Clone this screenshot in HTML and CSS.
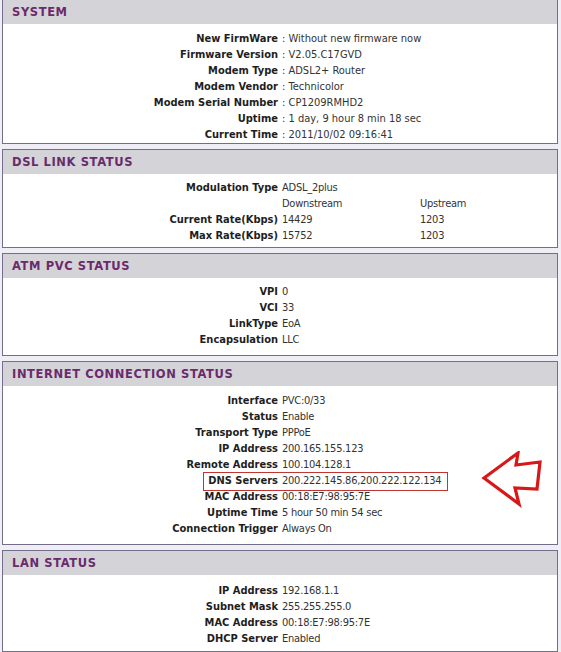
FILE: index.html
```html
<!DOCTYPE html>
<html>
<head>
<meta charset="utf-8">
<link rel="stylesheet" href="styles.css">
</head>
<body>
<div class="page">
  <section class="panel p-sys">
    <div class="panel-head">SYSTEM</div>
    <div class="panel-body kv sys">
      <span class="k">New FirmWare</span><span class="v">: Without new firmware now</span>
      <span class="k">Firmware Version</span><span class="v">: V2.05.C17GVD</span>
      <span class="k">Modem Type</span><span class="v">: ADSL2+ Router</span>
      <span class="k">Modem Vendor</span><span class="v">: Technicolor</span>
      <span class="k">Modem Serial Number</span><span class="v">: CP1209RMHD2</span>
      <span class="k">Uptime</span><span class="v">: 1 day, 9 hour 8 min 18 sec</span>
      <span class="k">Current Time</span><span class="v">: 2011/10/02 09:16:41</span>
    </div>
  </section>

  <section class="panel p-dsl">
    <div class="panel-head">DSL LINK STATUS</div>
    <div class="panel-body kv dsl">
      <span class="k">Modulation Type</span><span class="v">ADSL_2plus</span><span class="v"></span>
      <span class="k"></span><span class="v">Downstream</span><span class="v">Upstream</span>
      <span class="k">Current Rate(Kbps)</span><span class="v">14429</span><span class="v">1203</span>
      <span class="k">Max Rate(Kbps)</span><span class="v">15752</span><span class="v">1203</span>
    </div>
  </section>

  <section class="panel p-atm">
    <div class="panel-head">ATM PVC STATUS</div>
    <div class="panel-body kv std">
      <span class="k">VPI</span><span class="v">0</span>
      <span class="k">VCI</span><span class="v">33</span>
      <span class="k">LinkType</span><span class="v">EoA</span>
      <span class="k">Encapsulation</span><span class="v">LLC</span>
    </div>
  </section>

  <section class="panel p-inet">
    <div class="panel-head">INTERNET CONNECTION STATUS</div>
    <div class="panel-body kv std">
      <span class="k">Interface</span><span class="v">PVC:0/33</span>
      <span class="k">Status</span><span class="v">Enable</span>
      <span class="k">Transport Type</span><span class="v">PPPoE</span>
      <span class="k">IP Address</span><span class="v">200.165.155.123</span>
      <span class="k">Remote Address</span><span class="v">100.104.128.1</span>
      <span class="k"><span class="mark-k">DNS Servers</span></span><span class="v"><span class="mark-v">200.222.145.86,200.222.122.134</span></span>
      <span class="k">MAC Address</span><span class="v">00:18:E7:98:95:7E</span>
      <span class="k">Uptime Time</span><span class="v">5 hour 50 min 54 sec</span>
      <span class="k">Connection Trigger</span><span class="v">Always On</span>
    </div>
    <svg class="arrow" width="64" height="58" viewBox="0 0 64 58">
      <polygon points="3,27 37,2 35,14 59,11 56,38 34,37 38,53" fill="none" stroke="#d81818" stroke-width="3.2" stroke-linejoin="miter"/>
    </svg>
  </section>

  <section class="panel p-lan">
    <div class="panel-head">LAN STATUS</div>
    <div class="panel-body kv std">
      <span class="k">IP Address</span><span class="v">192.168.1.1</span>
      <span class="k">Subnet Mask</span><span class="v">255.255.255.0</span>
      <span class="k">MAC Address</span><span class="v">00:18:E7:98:95:7E</span>
      <span class="k">DHCP Server</span><span class="v">Enabled</span>
    </div>
  </section>
</div>
</body>
</html>
```

FILE: styles.css
```css
html, body {
  margin: 0;
  padding: 0;
  background: #efedf6;
}
body {
  font-family: "DejaVu Sans Condensed", "DejaVu Sans", sans-serif;
  font-size: 11px;
  color: #222;
}
.page {
  display: flex;
  flex-direction: column;
  gap: 5px;
  padding: 0 3px 0 2px;
  margin-top: -1px;
}
.panel {
  border: 1px solid #746d8c;
  background: #fff;
  position: relative;
}
.panel-head {
  background: #d4d4d8;
  height: 24px;
  line-height: 24px;
  padding-left: 9px;
  font-family: "DejaVu Sans", sans-serif;
  font-weight: bold;
  font-size: 11.5px;
  letter-spacing: 0.6px;
  color: #6b2a6b;
}
.panel-body {
  padding: 6px 0 3px;
}
.p-sys .panel-body { padding: 7px 0 0; }
.p-dsl .panel-body { padding-bottom: 3px; }
.p-atm .panel-body { padding-bottom: 7px; }
.p-inet .panel-body { padding: 7px 0 7px; }
.p-lan .panel-body { padding: 8px 0 4px; }

.kv {
  display: grid;
  line-height: 16px;
}
.sys,
.std {
  grid-template-columns: 275px 1fr;
  column-gap: 4px;
}
.dsl {
  grid-template-columns: 275px 134px 1fr;
  column-gap: 4px;
}
.k {
  text-align: right;
  font-weight: bold;
  color: #1e1e1e;
}
.v {
  color: #333;
}
.std .v,
.dsl .v {
  letter-spacing: -0.25px;
}
.mark-k {
  display: inline-block;
  border: 1px solid #c03434;
  border-right: none;
  padding: 0 0 1px 4px;
  margin: -1px 0 -2px;
}
.mark-v {
  display: inline-block;
  border: 1px solid #c03434;
  border-left: none;
  padding: 0 6px 1px 4px;
  margin: -1px 0 -2px -4px;
}
.k:has(.mark-k) {
  margin-right: -4px;
  padding-right: 4px;
}
.arrow {
  position: absolute;
  left: 478px;
  top: 89px;
}
```
